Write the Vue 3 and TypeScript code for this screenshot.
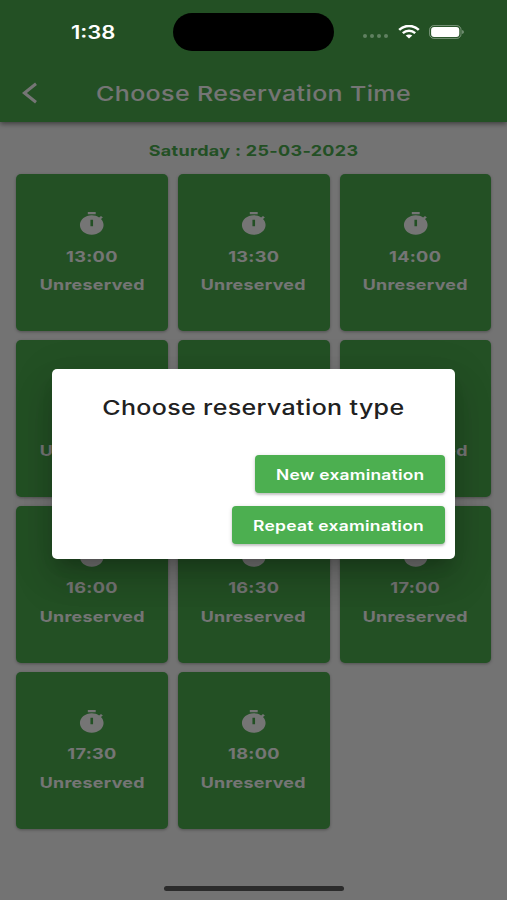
<script setup lang="ts">
interface Slot {
  time: string
  status: string
}

interface Action {
  label: string
  width: number
}

const date = 'Saturday : 25-03-2023'

const slots: Slot[] = [
  '13:00', '13:30', '14:00', '14:30', '15:00', '15:30', '16:00', '16:30', '17:00', '17:30', '18:00',
].map((time) => ({ time, status: 'Unreserved' }))

const actions: Action[] = [
  { label: 'New examination', width: 148.5 },
  { label: 'Repeat examination', width: 171 },
]
</script>

<template>
  <div class="phone">
    <header class="app-bar">
      <svg class="back" viewBox="0 0 16 22" fill="none" stroke="#fff" stroke-width="3">
        <path d="M14 1.8 2.4 11 14 20.2" />
      </svg>
      <h1 class="bar-title"><span class="wide">Choose Reservation Time</span></h1>
    </header>

    <main class="content">
      <p class="date"><span class="wide date-text">{{ date }}</span></p>
      <section class="grid">
        <article v-for="slot in slots" :key="slot.time" class="card">
          <svg class="timer" viewBox="0 0 24 24" preserveAspectRatio="none">
            <path
              fill="#fff"
              fill-rule="evenodd"
              d="M15 1H9v2h6V1zm-4 13h2V8h-2v6zm8.03-6.61 1.42-1.42c-.43-.51-.9-.99-1.41-1.41l-1.42 1.42C16.07 4.74 14.12 4 12 4c-4.97 0-9 4.03-9 9s4.02 9 9 9 9-4.03 9-9c0-2.12-.74-4.07-1.97-5.61z"
            />
          </svg>
          <span class="label time">{{ slot.time }}</span>
          <span class="label">{{ slot.status }}</span>
        </article>
      </section>
    </main>

    <div class="scrim">
      <div class="dialog" role="dialog">
        <h2 class="dialog-title"><span class="wide">Choose reservation type</span></h2>
        <div class="actions">
          <button v-for="action in actions" :key="action.label" class="action">
            <svg class="action-text" :width="action.width" height="20">
              <text x="0" y="15.5" :textLength="action.width" lengthAdjust="spacingAndGlyphs">{{ action.label }}</text>
            </svg>
          </button>
        </div>
      </div>
    </div>

    <div class="status-bar">
      <div class="clock"><span class="wide">1:38</span></div>
      <div class="island"></div>
      <div class="indicators">
        <div class="dots"><i v-for="n in 4" :key="n"></i></div>
        <svg class="wifi" viewBox="0 0 22 14" fill="none" stroke="#fff">
          <path d="M1.2 4.9C6.7-.3 15.3-.3 20.8 4.9" stroke-width="2.6" />
          <path d="M4.8 8.2c3.5-3.2 8.9-3.2 12.4 0" stroke-width="2.4" />
          <path d="M7.7 10.6c1.9-1.6 4.7-1.6 6.6 0L11 13.6z" fill="#fff" stroke="none" />
        </svg>
        <svg class="battery" viewBox="0 0 36 14">
          <rect x=".6" y=".6" width="31.4" height="12.8" rx="4.2" fill="none" stroke="#fff" stroke-opacity=".4" />
          <rect x="2.1" y="1.9" width="28.2" height="10.2" rx="3" fill="#fff" />
          <path d="M33.3 5v4c1.9-.6 1.9-3.4 0-4z" fill="#fff" fill-opacity=".5" />
        </svg>
      </div>
    </div>
    <div class="home-indicator"></div>
  </div>
</template>

<style>
body {
  margin: 0;
}
</style>

<style scoped>
.phone {
  position: relative;
  width: 507px;
  height: 900px;
  overflow: hidden;
  background: #fafafa;
  font-family: Inter, 'Liberation Sans', sans-serif;
}

h1,
h2,
p {
  margin: 0;
}

.wide {
  display: inline-block;
  white-space: nowrap;
  transform: scaleX(1.225);
}

.app-bar {
  position: relative;
  box-sizing: border-box;
  height: 122px;
  padding: 64px 0 0 21.5px;
  display: flex;
  align-items: center;
  background: #4caf50;
  box-shadow: 0 2px 5px rgba(0, 0, 0, 0.45);
}

.back {
  width: 16px;
  height: 22px;
}

.bar-title {
  flex: 1;
  padding: 2px 37px 0 0;
  text-align: center;
  color: #fff;
  font-size: 20.4px;
  letter-spacing: 0.3px;
  line-height: 26px;
  font-weight: 500;
}

.content {
  padding: 19px 15.5px 0 16px;
}

.date {
  height: 20px;
  text-align: center;
  line-height: 20px;
  font-size: 14.7px;
  letter-spacing: 0.25px;
  font-weight: 700;
  color: #4caf50;
}

.date-text {
  transform: scaleX(1.225);
}

.grid {
  margin-top: 13.2px;
  display: grid;
  grid-template-columns: repeat(3, 1fr);
  grid-auto-rows: 157.2px;
  gap: 8.6px 10px;
}

.card {
  display: flex;
  flex-direction: column;
  align-items: center;
  box-sizing: border-box;
  padding-top: 37px;
  border-radius: 5px;
  background: #4caf50;
  box-shadow: 0 1px 3px rgba(0, 0, 0, 0.3);
}

.timer {
  width: 31.5px;
  height: 26px;
  margin-bottom: 9.5px;
}

.label {
  font-size: 14.7px;
  letter-spacing: 0.25px;
  line-height: 20px;
  font-weight: 650;
  color: #fff;
  transform: scaleX(1.215);
}

.time {
  margin-bottom: 8.7px;
  transform: scaleX(1.235);
}

.scrim {
  position: absolute;
  inset: 0;
  display: flex;
  align-items: center;
  justify-content: center;
  padding-top: 27px;
  background: rgba(0, 0, 0, 0.54);
}

.dialog {
  box-sizing: border-box;
  width: 403px;
  height: 190px;
  padding: 26px 10px 0;
  border-radius: 5px;
  background: #fff;
  box-shadow:
    0 11px 15px -7px rgba(0, 0, 0, 0.2),
    0 24px 38px 3px rgba(0, 0, 0, 0.12),
    0 9px 40px 4px rgba(0, 0, 0, 0.1);
}

.dialog-title {
  text-align: center;
  font-size: 20.4px;
  letter-spacing: 0.3px;
  line-height: 26px;
  font-weight: 500;
  color: #212121;
}

.actions {
  margin-top: 34.5px;
  display: flex;
  flex-direction: column;
  align-items: flex-end;
  gap: 12.6px;
}

.action {
  height: 38px;
  padding: 0 21px;
  display: flex;
  align-items: center;
  border: 0;
  border-radius: 4px;
  background: #4caf50;
  box-shadow:
    0 2px 2px rgba(0, 0, 0, 0.14),
    0 1px 4px rgba(0, 0, 0, 0.16);
}

.action-text {
  display: block;
  overflow: visible;
  fill: #fff;
  font-family: Inter, 'Liberation Sans', sans-serif;
  font-size: 14.7px;
  letter-spacing: 0.2px;
  font-weight: 600;
}

.status-bar {
  position: absolute;
  inset: 0 0 auto;
  height: 64px;
  display: grid;
  grid-template-columns: 173.4px 161px 1fr;
  align-items: center;
  color: #fff;
}

.clock {
  padding: 1px 0 0 12px;
  text-align: center;
  font-size: 18px;
  line-height: 24px;
  font-weight: 600;
}

.island {
  height: 38.5px;
  border-radius: 20px;
  background: #000;
}

.indicators {
  display: flex;
  align-items: center;
  padding-left: 29px;
}

.dots {
  display: flex;
  gap: 3px;
  padding-top: 8px;
}

.dots i {
  width: 4px;
  height: 4px;
  border-radius: 50%;
  background: rgba(255, 255, 255, 0.28);
}

.wifi {
  width: 22px;
  height: 14px;
  margin: 0 9.5px 0 9.5px;
}

.battery {
  width: 36px;
  height: 14px;
}

.home-indicator {
  position: absolute;
  left: 164px;
  bottom: 9px;
  width: 180px;
  height: 5px;
  border-radius: 3px;
  background: #2b2b2b;
}
</style>
